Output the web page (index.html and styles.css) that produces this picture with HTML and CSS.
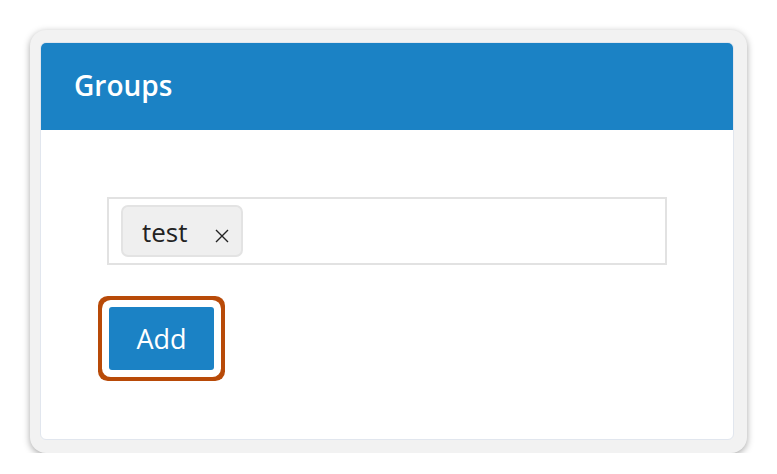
FILE: index.html
```html
<!DOCTYPE html>
<html>
<head>
<meta charset="utf-8">
<link rel="stylesheet" href="styles.css">
</head>
<body>
<div class="frame">
  <div class="card">
    <div class="card-header">
      <h1 class="title">Groups</h1>
    </div>
    <div class="card-body">
      <div class="tag-input">
        <span class="tag"><span class="tag-label">test</span><svg class="tag-remove" width="14" height="14" viewBox="0 0 14 14"><path d="M1 1L13 13M13 1L1 13" stroke="#222" stroke-width="1.4" fill="none"/></svg></span>
      </div>
      <button class="btn-add">Add</button>
    </div>
  </div>
</div>
</body>
</html>
```
FILE: styles.css
```css
html, body {
  margin: 0;
  padding: 0;
  background: #ffffff;
  font-family: "Open Sans", "Noto Sans", sans-serif;
}
body {
  padding: 30px 0 0 30px;
}
.frame {
  width: 717px;
  height: 423px;
  box-sizing: border-box;
  padding: 12px 13px 13px 10px;
  background: #f2f2f2;
  border-radius: 16px;
  box-shadow: 0 2px 7px rgba(0,0,0,0.35);
}
.card {
  width: 694px;
  height: 398px;
  box-sizing: border-box;
  background: #ffffff;
  border: 1px solid #e1e6ee;
  border-radius: 6px;
  overflow: hidden;
}
.card-header {
  height: 88px;
  margin: -1px -1px 0 -1px;
  background: #1b82c5;
  display: flex;
  align-items: center;
  padding-left: 34px;
  box-sizing: border-box;
}
.title {
  margin: 0;
  color: #ffffff;
  font-size: 28px;
  font-weight: 600;
  line-height: 1;
  padding-bottom: 2px;
}
.card-body {
  padding: 67px 0 0 66px;
  display: flex;
  flex-direction: column;
  align-items: flex-start;
}
.tag-input {
  width: 560px;
  height: 68px;
  box-sizing: border-box;
  border: 2px solid #e2e2e2;
  padding: 6px 0 0 12px;
}
.tag {
  display: inline-flex;
  align-items: center;
  height: 52px;
  width: 122px;
  box-sizing: border-box;
  background: #efefef;
  border: 2px solid #e3e3e3;
  border-radius: 7px;
  padding-left: 19px;
}
.tag-label {
  font-size: 26px;
  color: #222222;
  line-height: 1;
  padding-top: 2px;
}
.tag-remove {
  margin-left: 27px;
  margin-top: 10px;
  flex: none;
}
.btn-add {
  margin: 42px 0 0 2px;
  width: 105px;
  height: 63px;
  background: #1b82c5;
  color: #ffffff;
  border: none;
  border-radius: 3px;
  font-family: "Open Sans", "Noto Sans", sans-serif;
  font-size: 27px;
  padding: 0;
  box-shadow: 0 0 0 7px #ffffff, 0 0 0 11px #b84a08;
}
```
